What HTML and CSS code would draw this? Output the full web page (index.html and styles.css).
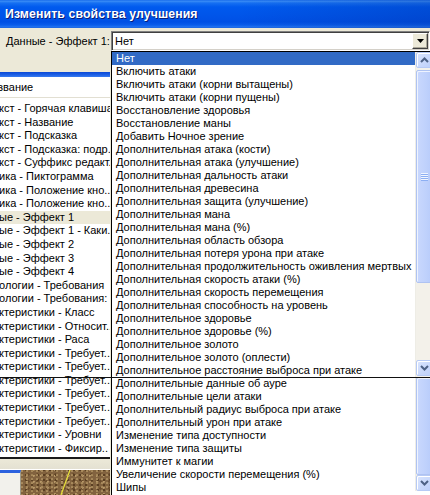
FILE: index.html
```html
<!DOCTYPE html>
<html lang="ru">
<head>
<meta charset="utf-8">
<title>Изменить свойства улучшения</title>
<link rel="stylesheet" href="styles.css">
</head>
<body>
<div class="window">
  <div class="titlebar"><span class="title">Изменить свойства улучшения</span></div>
  <div class="field-row">
    <span class="label">Данные - Эффект 1:</span>
    <div class="combo">
      <span class="combo-value">Нет</span>
      <span class="combo-btn"><svg width="7" height="4" viewBox="0 0 7 4"><path d="M0 0h7L3.5 4z" fill="#000"/></svg></span>
    </div>
  </div>
  <div class="main">
    <div class="left">
      <div class="inner-title"></div>
      <div class="listview">
        <div class="lv-header"><span class="lv-head-text">звание</span></div>
        <div class="lv-rows">
          <div class="lv-row">кст - Горячая клавиша</div>
          <div class="lv-row">кст - Название</div>
          <div class="lv-row">кст - Подсказка</div>
          <div class="lv-row">кст - Подсказка: подр..</div>
          <div class="lv-row">кст - Суффикс редакт..</div>
          <div class="lv-row">ика - Пиктограмма</div>
          <div class="lv-row">ика - Положение кно..</div>
          <div class="lv-row">ика - Положение кно..</div>
          <div class="lv-row sel">ые - Эффект 1</div>
          <div class="lv-row">ые - Эффект 1 - Каки..</div>
          <div class="lv-row">ые - Эффект 2</div>
          <div class="lv-row">ые - Эффект 3</div>
          <div class="lv-row">ые - Эффект 4</div>
          <div class="lv-row">ологии - Требования</div>
          <div class="lv-row">ологии - Требования: ..</div>
          <div class="lv-row">ктеристики - Класс</div>
          <div class="lv-row">ктеристики - Относит..</div>
          <div class="lv-row">ктеристики - Раса</div>
          <div class="lv-row">ктеристики - Требует..</div>
          <div class="lv-row">ктеристики - Требует..</div>
          <div class="lv-row">ктеристики - Требует..</div>
          <div class="lv-row">ктеристики - Требует..</div>
          <div class="lv-row">ктеристики - Требует..</div>
          <div class="lv-row">ктеристики - Требует..</div>
          <div class="lv-row">ктеристики - Уровни</div>
          <div class="lv-row">ктеристики - Фиксир..</div>
        </div>
      </div>
      <div class="tool-strip"></div>
      <div class="view-row">
        <div class="mini-panel"></div>
        <div class="terrain">
          <svg class="terrain-line" width="90" height="25" viewBox="0 0 90 25"><path d="M49 0 L40 25" stroke="#E8E23A" stroke-width="1.2" fill="none"/></svg>
        </div>
      </div>
    </div>
  </div>

  <div class="seam"></div>

  <div class="dropdown">
    <ul class="items">
      <li class="item sel">Нет</li>
      <li class="item">Включить атаки</li>
      <li class="item">Включить атаки (корни вытащены)</li>
      <li class="item">Включить атаки (корни пущены)</li>
      <li class="item">Восстановление здоровья</li>
      <li class="item">Восстановление маны</li>
      <li class="item">Добавить Ночное зрение</li>
      <li class="item">Дополнительная атака (кости)</li>
      <li class="item">Дополнительная атака (улучшение)</li>
      <li class="item">Дополнительная дальность атаки</li>
      <li class="item">Дополнительная древесина</li>
      <li class="item">Дополнительная защита (улучшение)</li>
      <li class="item">Дополнительная мана</li>
      <li class="item">Дополнительная мана (%)</li>
      <li class="item">Дополнительная область обзора</li>
      <li class="item">Дополнительная потеря урона при атаке</li>
      <li class="item">Дополнительная продолжительность оживления мертвых</li>
      <li class="item">Дополнительная скорость атаки (%)</li>
      <li class="item">Дополнительная скорость перемещения</li>
      <li class="item">Дополнительная способность на уровень</li>
      <li class="item">Дополнительное здоровье</li>
      <li class="item">Дополнительное здоровье (%)</li>
      <li class="item">Дополнительное золото</li>
      <li class="item">Дополнительное золото (оплести)</li>
      <li class="item">Дополнительное расстояние выброса при атаке</li>
      <li class="item">Дополнительные данные об ауре</li>
      <li class="item">Дополнительные цели атаки</li>
      <li class="item">Дополнительный радиус выброса при атаке</li>
      <li class="item">Дополнительный урон при атаке</li>
      <li class="item">Изменение типа доступности</li>
      <li class="item">Изменение типа защиты</li>
      <li class="item">Иммунитет к магии</li>
      <li class="item">Увеличение скорости перемещения (%)</li>
      <li class="item">Шипы</li>
    </ul>
    <div class="scrollbar">
      <div class="sb-btn up"><svg width="9" height="6" viewBox="0 0 9 6"><path d="M1 5 L4.5 1.5 L8 5" stroke="#4D6185" stroke-width="2" fill="none"/></svg></div>
      <div class="sb-thumb tall"><span class="grip"></span></div>
      <div class="sb-track"></div>
      <div class="sb-btn down"><svg width="9" height="6" viewBox="0 0 9 6"><path d="M1 1 L4.5 4.5 L8 1" stroke="#4D6185" stroke-width="2" fill="none"/></svg></div>
      <div class="sb-thumb lower"></div>
      <div class="sb-btn down"><svg width="9" height="6" viewBox="0 0 9 6"><path d="M1 1 L4.5 4.5 L8 1" stroke="#4D6185" stroke-width="2" fill="none"/></svg></div>
    </div>
  </div>
</div>
</body>
</html>
```

FILE: styles.css
```css
html, body {
  margin: 0;
  padding: 0;
}
body {
  width: 430px;
  height: 495px;
  overflow: hidden;
  background: #ECE9D8;
  font-family: "Liberation Sans", Arial, sans-serif;
  font-size: 11px;
  color: #000;
}
.window {
  position: relative;
  width: 430px;
  height: 495px;
  overflow: hidden;
}
.titlebar {
  height: 28px;
  display: flex;
  align-items: center;
  padding-left: 5px;
  background:
    linear-gradient(to right, rgba(0,0,0,0) 55%, rgba(0,20,110,0.18) 100%),
    linear-gradient(#0A5FE8 0, #3D8FF6 1px, #1670F2 3px, #005AEE 7px, #0053E8 18px, #0050E4 22px, #0A5DEB 25px, #2474F1 27px, #1A5FD8 28px);
}
.title {
  color: #fff;
  font-weight: bold;
  font-size: 12.3px;
  letter-spacing: 0.1px;
  text-shadow: 1px 1px 0 #0A1E78;
}
.field-row {
  display: flex;
  align-items: center;
  height: 20px;
  margin-top: 3px;
}
.label {
  width: 106px;
  padding-left: 6px;
}
.combo {
  box-sizing: border-box;
  width: 322px;
  height: 20px;
  display: flex;
  align-items: center;
  background: #fff;
  border: 1px solid;
  border-color: #808080 #fff #fff #808080;
  box-shadow: inset 1px 1px 0 #404040, inset -1px -1px 0 #D4D0C8;
  padding: 1px 1px 1px 3px;
}
.combo-value {
  flex: 1;
}
.combo-btn {
  box-sizing: border-box;
  width: 16px;
  height: 16px;
  display: flex;
  align-items: center;
  justify-content: center;
  background: #ECE9D8;
  border: 1px solid;
  border-color: #fff #404040 #404040 #fff;
  box-shadow: inset -1px -1px 0 #ACA899;
}
.main {
  display: flex;
}
.left {
  width: 110px;
  display: flex;
  flex-direction: column;
}
.inner-title {
  height: 5px;
  margin-top: 21px;
  background: linear-gradient(#0A48D6, #1F62E6 60%, #3A7CF0);
}
.listview {
  background: #fff;
  border-bottom: 2px solid #1A1A1A;
  height: 380px;
  overflow: hidden;
}
.lv-header {
  height: 20px;
  display: flex;
  align-items: center;
  background: #fff;
  border-bottom: 1px solid #E2DFD2;
  overflow: hidden;
}
.lv-head-text {
  margin-left: -2px;
  white-space: nowrap;
}
.lv-rows {
  padding-top: 4px;
}
.lv-row {
  height: 13.6px;
  line-height: 13.6px;
  white-space: nowrap;
  overflow: hidden;
  margin-left: -1px;
  padding-left: 0;
}
.lv-row.sel {
  background: #ECE9D8;
  margin-left: 0;
  padding-left: 0;
  text-indent: -1px;
}
.tool-strip {
  height: 10px;
  background: linear-gradient(#ECE9D8, #E4E1D2);
  border-bottom: 1px solid #fff;
}
.view-row {
  display: flex;
  height: 30px;
}
.mini-panel {
  width: 20px;
  background: #F2F1EC;
  border-top: 3px solid #2C62DE;
  border-right: 1px solid #9E9A8A;
}
.terrain {
  position: relative;
  flex: 1;
  background:
    radial-gradient(circle at 20% 30%, #A88A5C 0 0.8px, transparent 1.3px) 0 0 / 5px 4px,
    radial-gradient(circle at 70% 60%, #5A3F22 0 0.9px, transparent 1.4px) 1px 2px / 6px 5px,
    radial-gradient(circle at 40% 80%, #B99A6A 0 0.7px, transparent 1.2px) 3px 1px / 7px 6px,
    radial-gradient(circle at 60% 20%, #6A4C2C 0 1px, transparent 1.5px) 2px 3px / 9px 7px,
    #82633F;
}
.terrain-line {
  position: absolute;
  left: 0;
  top: 0;
}
.seam {
  position: absolute;
  left: 0;
  top: 377px;
  width: 430px;
  height: 1px;
  background: #111;
  z-index: 2;
}
.dropdown {
  position: absolute;
  top: 51px;
  left: 111px;
  width: 323px;
  height: 460px;
  box-sizing: border-box;
  border: 1px solid #000;
  background: #fff;
  z-index: 1;
}
.items {
  list-style: none;
  margin: 0;
  padding: 0;
}
.item {
  height: 13px;
  line-height: 13px;
  padding-left: 4px;
  white-space: nowrap;
  overflow: hidden;
}
.item.sel {
  background: #316AC5;
  color: #fff;
}
.scrollbar {
  position: absolute;
  top: 0;
  right: 0;
  width: 17px;
  display: flex;
  flex-direction: column;
  background: #F4F2EB;
  border-left: 1px solid #EEEDE6;
  z-index: 3;
}
.sb-btn {
  box-sizing: border-box;
  height: 16px;
  display: flex;
  align-items: center;
  justify-content: center;
  background: linear-gradient(135deg, #D9E4FD, #BCCFFA);
  border: 1px solid #B7CAF5;
  border-radius: 2px;
  box-shadow: inset 1px 1px 0 #fff;
}
.sb-btn.up {
  margin-bottom: 2px;
}
.sb-thumb {
  box-sizing: border-box;
  background: linear-gradient(to right, #C9D8FD, #BFD1FC 60%, #B7CBFA);
  border: 1px solid #AFC3F2;
  border-radius: 2px;
  box-shadow: inset 1px 1px 0 #EEF3FF;
  display: flex;
  align-items: center;
  justify-content: center;
}
.sb-thumb.tall {
  height: 213px;
}
.grip {
  width: 7px;
  height: 8px;
  background: repeating-linear-gradient(#F2F6FF 0 1px, #8DAFF3 1px 2px);
}
.sb-track {
  height: 77px;
  background: #F3F1EA;
}
.sb-btn.down {
  margin-top: 0;
}
.sb-thumb.lower {
  height: 98px;
  margin-top: 1px;
}
```
